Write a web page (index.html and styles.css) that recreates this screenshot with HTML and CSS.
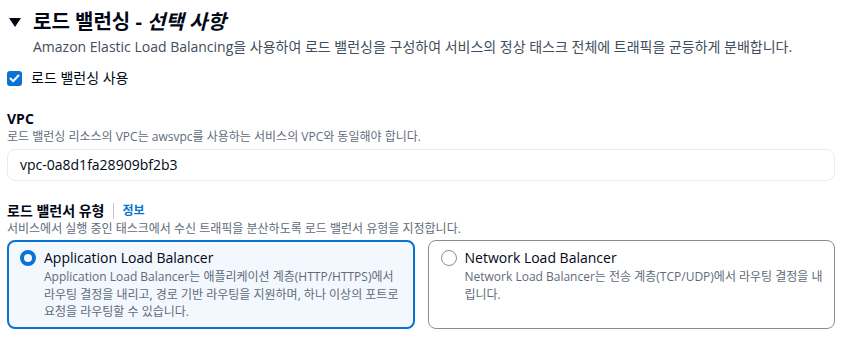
FILE: index.html
```html
<!DOCTYPE html>
<html lang="ko">
<head>
    <meta charset="UTF-8">
    <title>로드 밸런싱</title>
    <link rel="stylesheet" href="styles.css">
</head>
<body>

<section class="panel">
    <div class="panel-head">
        <span class="caret"></span>
        <h2>로드 밸런싱 - <em>선택 사항</em></h2>
    </div>
    <p class="panel-desc">Amazon Elastic Load Balancing을 사용하여 로드 밸런싱을 구성하여 서비스의 정상 태스크 전체에 트래픽을 균등하게 분배합니다.</p>

    <label class="check">
        <span class="checkbox">
            <svg width="11" height="9" viewBox="0 0 11 9"><path d="M1.5 4.5 L4.2 7.2 L9.5 1.5" fill="none" stroke="#fff" stroke-width="2" stroke-linecap="round" stroke-linejoin="round"/></svg>
        </span>
        로드 밸런싱 사용
    </label>

    <div class="field">
        <div class="field-label">VPC</div>
        <div class="field-desc">로드 밸런싱 리소스의 VPC는 awsvpc를 사용하는 서비스의 VPC와 동일해야 합니다.</div>
        <div class="input">vpc-0a8d1fa28909bf2b3</div>
    </div>

    <div class="field">
        <div class="field-label">로드 밸런서 유형 <span class="sep"></span><a href="#" class="info">정보</a></div>
        <div class="field-desc">서비스에서 실행 중인 태스크에서 수신 트래픽을 분산하도록 로드 밸런서 유형을 지정합니다.</div>
        <div class="tiles">
            <div class="tile selected">
                <span class="radio"></span>
                <div>
                    <div class="tile-title">Application Load Balancer</div>
                    <div class="tile-desc">Application Load Balancer는 애플리케이션 계층(HTTP/HTTPS)에서 라우팅 결정을 내리고, 경로 기반 라우팅을 지원하며, 하나 이상의 포트로 요청을 라우팅할 수 있습니다.</div>
                </div>
            </div>
            <div class="tile">
                <span class="radio"></span>
                <div>
                    <div class="tile-title">Network Load Balancer</div>
                    <div class="tile-desc">Network Load Balancer는 전송 계층(TCP/UDP)에서 라우팅 결정을 내립니다.</div>
                </div>
            </div>
        </div>
    </div>
</section>

</body>
</html>
```

FILE: styles.css
```css
body {
    font-family: "Open Sans", "Noto Sans CJK KR", sans-serif;
    background-color: #fff;
    color: #000716;
    margin: 0;
    padding: 0;
}
.panel {
    padding: 8px 18px 0 7px;
}
.panel-head {
    display: flex;
    align-items: center;
    gap: 12px;
    padding-left: 2px;
}
.caret {
    width: 0;
    height: 0;
    border-left: 6px solid transparent;
    border-right: 6px solid transparent;
    border-top: 9px solid #000716;
}
.panel-head h2 {
    font-size: 20px;
    font-weight: 700;
    margin: 0;
    line-height: 28px;
}
.panel-head em {
    font-style: italic;
}
.panel-desc {
    margin: 1px 0 0 26px;
    font-size: 14px;
    line-height: 20px;
    color: #414d5c;
}
.check {
    display: flex;
    align-items: center;
    gap: 9px;
    margin-top: 11px;
    font-size: 14px;
    line-height: 20px;
}
.checkbox {
    width: 15px;
    height: 15px;
    border-radius: 3px;
    background-color: #0972d3;
    display: flex;
    align-items: center;
    justify-content: center;
}
.field {
    margin-top: 21px;
}
.field + .field {
    margin-top: 20px;
}
.field-label {
    font-size: 14px;
    font-weight: 700;
    line-height: 20px;
    display: flex;
    align-items: center;
}
.sep {
    display: inline-block;
    width: 1px;
    height: 16px;
    background-color: #c6c6cd;
    margin: 0 8px 0 9px;
}
.info {
    color: #0972d3;
    font-size: 12px;
    font-weight: 700;
    text-decoration: none;
}
.field-desc {
    font-size: 12px;
    line-height: 16px;
    color: #5f6b7a;
}
.input {
    margin-top: 4px;
    border: 1px solid #e9ebed;
    border-radius: 8px;
    padding: 5px 12px;
    font-size: 14px;
    line-height: 20px;
}
.tiles {
    display: grid;
    grid-template-columns: 1fr 1fr;
    gap: 13px;
    margin-top: 3px;
}
.tile {
    display: flex;
    gap: 8px;
    border: 1px solid #8c8c94;
    border-radius: 8px;
    padding: 7px 9px 9px 12px;
    height: 71px;
}
.tile.selected {
    border: 2px solid #0972d3;
    background-color: #f2f8fd;
    padding: 6px 8px 8px 11px;
    height: 71px;
}
.radio {
    flex: none;
    width: 14px;
    height: 14px;
    border: 1px solid #8c8c94;
    border-radius: 50%;
    margin-top: 2px;
}
.selected .radio {
    width: 8px;
    height: 8px;
    border: 4px solid #0972d3;
}
.tile-title {
    font-size: 14px;
    line-height: 20px;
}
.tile-desc {
    font-size: 12px;
    line-height: 17.5px;
    color: #5f6b7a;
}
```
